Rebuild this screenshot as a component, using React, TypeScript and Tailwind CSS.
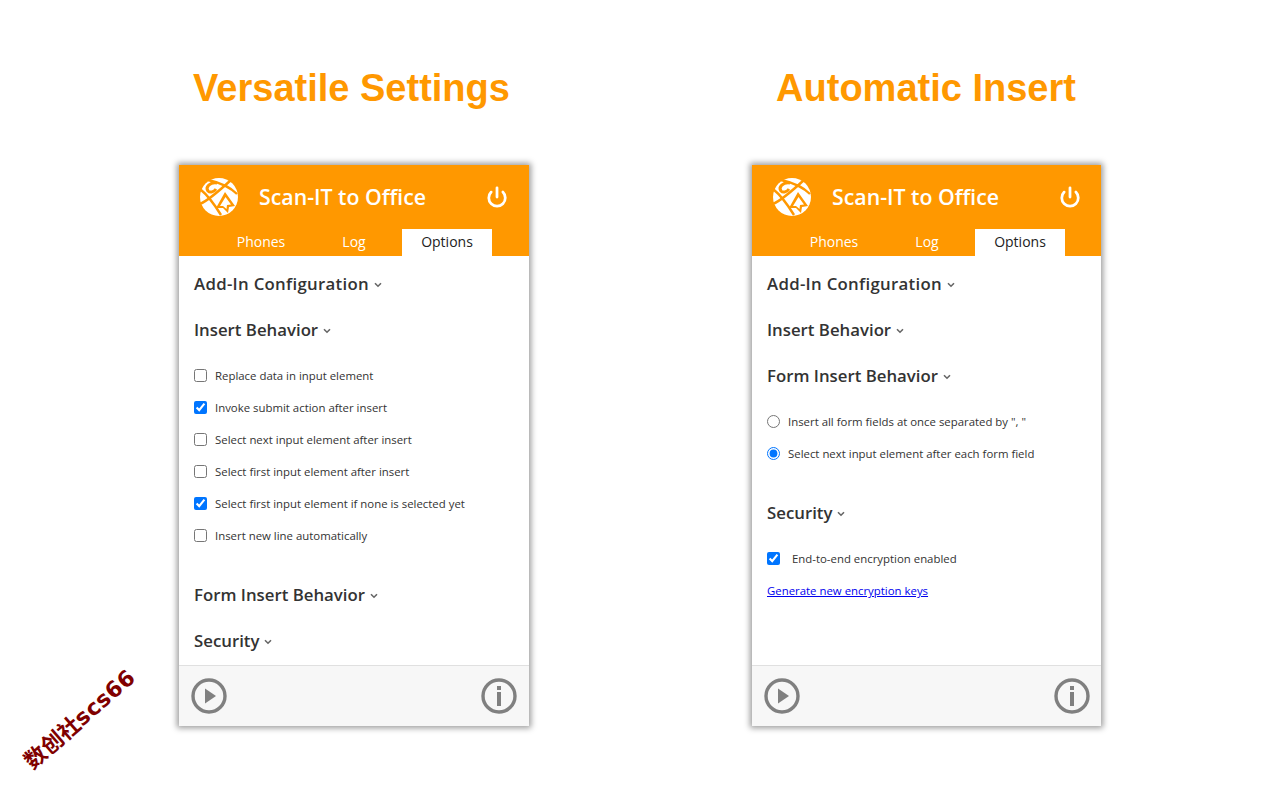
import React from 'react';
import { Power } from 'lucide-react';

const Chevron = () => (
  <svg width="8" height="6" viewBox="0 0 8 6" className="ml-[5px] mt-[1px]" fill="none">
    <path d="M1 1.2 L4 4.2 L7 1.2" stroke="#666" strokeWidth="1.6" />
  </svg>
);

const Heading = ({ title, wide }: { title: string; wide?: boolean }) => (
  <div className={`h-[46px] flex items-center text-[16.8px] font-semibold text-[#333] ${wide ? 'tracking-[0.3px]' : ''}`}>
    <span>{title}</span>
    <Chevron />
  </div>
);

const Check = ({ label, checked, gap = 'gap-[8px]' }: { label: string; checked?: boolean; gap?: string }) => (
  <label className={`h-8 flex items-center text-[11.4px] text-[#333] ${gap}`}>
    <input type="checkbox" defaultChecked={checked} className="m-0 -mt-px w-[13px] h-[13px]" />
    <span>{label}</span>
  </label>
);

const Radio = ({ label, checked }: { label: string; checked?: boolean }) => (
  <label className="h-8 flex items-center gap-[8px] text-[11.4px] text-[#333]">
    <input type="radio" name="forminsert" defaultChecked={checked} className="m-0 -mt-px w-[13px] h-[13px]" />
    <span>{label}</span>
  </label>
);

const Logo = () => (
  <svg width="40" height="40" viewBox="0 0 40 40">
    <circle cx="20" cy="20" r="19" fill="#fff" />
    <g fill="none" stroke="#ff9800" strokeWidth="2.4">
      {/* globe bands */}
      <path d="M1 27 C8 24 20 14 32 3" />
      <path d="M1 12 C6 16 14 25 22 38" />
      <path d="M9 3 C18 5 30 9 38 17" />
      {/* hook, upper left */}
      <path d="M18 6 C11 5 6 10 9 14 C11 16 15 15 17 12" strokeWidth="3" />
    </g>
    {/* arrow, lower right */}
    <path d="M26 15 L36 29 L30 30 L29 36 L24 31 L17 31 Z" fill="#ff9800" />
    <path d="M26.5 20 L32 27.5 L28 28 L27.5 32 L24 29 L21 29 Z" fill="#fff" />
  </svg>
);

const PlayIcon = () => (
  <svg width="36" height="36" viewBox="0 0 36 36" fill="none">
    <circle cx="18" cy="18" r="16" stroke="#808080" strokeWidth="3.4" />
    <path d="M14 10.5 L25 18 L14 25.5 Z" fill="#808080" />
  </svg>
);

const InfoIcon = () => (
  <svg width="36" height="36" viewBox="0 0 36 36" fill="none">
    <circle cx="18" cy="18" r="16" stroke="#808080" strokeWidth="3.4" />
    <rect x="16" y="8" width="4" height="4" fill="#808080" />
    <rect x="16" y="14" width="4" height="14" fill="#808080" />
  </svg>
);

const Panel = ({ children, narrow }: { children: React.ReactNode; narrow?: boolean }) => (
  <div className={`${narrow ? 'w-[349px]' : 'w-[350px]'} h-[561px] flex flex-col bg-white shadow-[0_0_6px_2px_rgba(0,0,0,0.4)]`}>
    <div className="h-[91px] bg-[#ff9800] flex flex-col">
      <div className={`h-16 flex items-center pl-[20px] ${narrow ? 'pr-[20px]' : 'pr-[21px]'} text-white`}>
        <Logo />
        <span className="ml-[20px] text-[21.3px] font-semibold">Scan-IT to Office</span>
        <Power size={22} strokeWidth={3} className="ml-auto" />
      </div>
      <div className="h-[27px] pl-[37px] flex gap-[3px] text-[14px] text-white">
        <div className="w-[90px] pb-[2px] flex items-center justify-center">Phones</div>
        <div className="w-[90px] pb-[2px] flex items-center justify-center">Log</div>
        <div className="w-[90px] pb-[2px] flex items-center justify-center bg-white text-[#222]">Options</div>
      </div>
    </div>
    <div className="flex-1 pt-[5px] px-[15px]">{children}</div>
    <div className={`h-[61px] border-t border-[#e0e0e0] bg-[#f7f7f7] pl-[12px] ${narrow ? 'pr-[11px]' : 'pr-[12px]'} flex items-center justify-between`}>
      <PlayIcon />
      <InfoIcon />
    </div>
  </div>
);

const App: React.FC = () => {
  return (
    <div className="relative w-[1280px] h-[800px] bg-white overflow-hidden font-['Open_Sans',sans-serif]">
      {/* Titles */}
      <div className="flex pl-[179px] gap-[223px] pt-[63px] h-[165px]">
        <h1 className="w-[350px] pr-[5px] text-center text-[38px] leading-[50px] font-bold text-[#ff9800] font-['Liberation_Sans',sans-serif]">
          Versatile Settings
        </h1>
        <h1 className="w-[349px] pr-[1px] text-center text-[38px] leading-[50px] font-bold text-[#ff9800] font-['Liberation_Sans',sans-serif]">
          Automatic Insert
        </h1>
      </div>

      <div className="flex pl-[179px] gap-[223px]">
        <Panel>
          <Heading title="Add-In Configuration" wide />
          <Heading title="Insert Behavior" />
          <div className="pt-[7px] pb-[20px]">
            <Check label="Replace data in input element" />
            <Check label="Invoke submit action after insert" checked />
            <Check label="Select next input element after insert" />
            <Check label="Select first input element after insert" />
            <Check label="Select first input element if none is selected yet" checked />
            <Check label="Insert new line automatically" />
          </div>
          <Heading title="Form Insert Behavior" />
          <Heading title="Security" />
        </Panel>

        <Panel narrow>
          <Heading title="Add-In Configuration" wide />
          <Heading title="Insert Behavior" />
          <Heading title="Form Insert Behavior" />
          <div className="pt-[7px] pb-[20px]">
            <Radio label={'Insert all form fields at once separated by ", "'} />
            <Radio label="Select next input element after each form field" checked />
          </div>
          <Heading title="Security" />
          <div className="pt-[7px]">
            <Check label="End-to-end encryption enabled" checked gap="gap-[12px]" />
            <div className="h-8 flex items-center text-[11.4px]">
              <a href="#" className="text-[#0000ee] underline">Generate new encryption keys</a>
            </div>
          </div>
        </Panel>
      </div>

      {/* watermark */}
      <div className="absolute left-[10px] top-[703px] text-[22px] leading-[28px] font-bold text-[#800000] whitespace-nowrap rotate-[-41deg] font-['DejaVu_Sans','Noto_Sans_CJK_SC',sans-serif]">
        <span className="font-['Noto_Sans_CJK_SC',sans-serif]">数创社</span>
        <span className="tracking-[0.5px]">scs66</span>
      </div>
    </div>
  );
};

export default App;
